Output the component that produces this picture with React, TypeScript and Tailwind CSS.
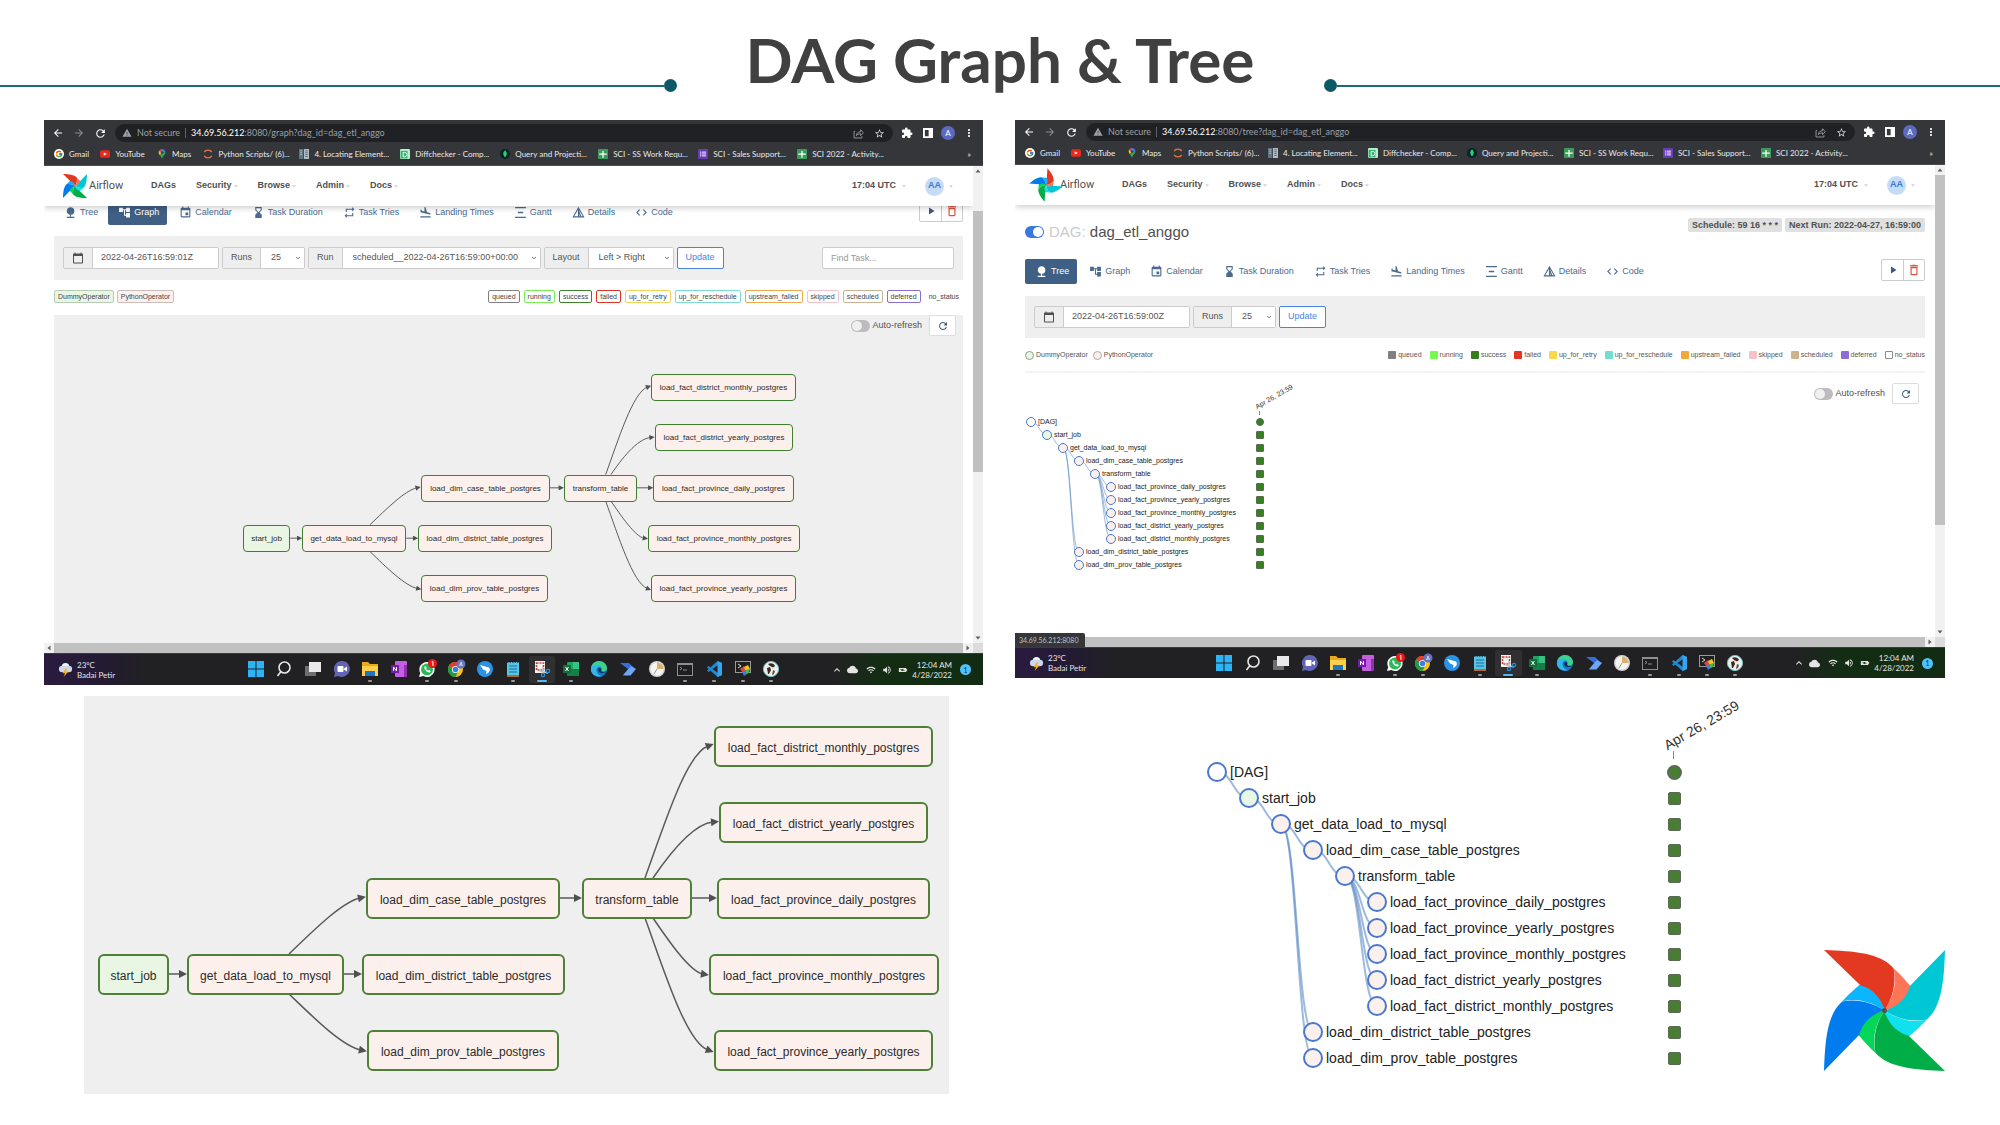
import React from "react";
import {
  MdNature,
  MdAccountTree,
  MdEvent,
  MdHourglassBottom,
  MdRepeat,
  MdFlightLand,
  MdVerticalDistribute,
  MdCode,
  MdPlayArrow,
  MdDeleteOutline,
  MdCalendarToday,
  MdRefresh,
  MdArrowBack,
  MdArrowForward,
  MdWarning,
  MdStarBorder,
  MdExtension,
  MdMoreVert,
  MdCloud,
  MdWifi,
  MdVolumeUp,
  MdBatteryChargingFull,
  MdExpandLess,
  MdExpandMore,
} from "react-icons/md";
import { FcGoogle } from "react-icons/fc";

/* ---------- Airflow pinwheel ---------- */

const BLADES = [
  { turn: 0, dark: "#e43921", light: "#ff7557" },
  { turn: 90, dark: "#00c7d4", light: "#11e1ee" },
  { turn: 180, dark: "#00ad46", light: "#04d659" },
  { turn: 270, dark: "#017cee", light: "#0cb6ff" },
];

function Pinwheel({ className }: { className: string }) {
  return (
    <svg viewBox="0 0 120 120" className={className} role="img" aria-label="Apache Airflow">
      {BLADES.map((b) => (
        <path
          key={b.light}
          transform={`rotate(${b.turn} 60 60)`}
          d="M69 18 C78 26 83 33 87 37 C84 48 74 57 60 60 C68 48 73 33 69 18 Z"
          fill={b.light}
        />
      ))}
      {BLADES.map((b) => (
        <path
          key={b.dark}
          transform={`rotate(${b.turn} 60 60)`}
          d="M0 0 C30 1 56 3 69 18 C72 33 68 48 60 60 C57 48 48 38 36 35 Z"
          fill={b.dark}
        />
      ))}
      <circle cx="60" cy="60" r="2.5" fill="#51504f" />
    </svg>
  );
}

/* ---------- DAG graph ---------- */

type GraphNode = { id: string; x: number; w: number; row: number };

const NODES: GraphNode[] = [
  { id: "start_job", x: 14, w: 71, row: 3 },
  { id: "get_data_load_to_mysql", x: 103, w: 157, row: 3 },
  { id: "load_dim_case_table_postgres", x: 282, w: 194, row: 2 },
  { id: "load_dim_district_table_postgres", x: 278, w: 203, row: 3 },
  { id: "load_dim_prov_table_postgres", x: 283, w: 192, row: 4 },
  { id: "transform_table", x: 498, w: 110, row: 2 },
  { id: "load_fact_district_monthly_postgres", x: 630, w: 219, row: 0 },
  { id: "load_fact_district_yearly_postgres", x: 635, w: 209, row: 1 },
  { id: "load_fact_province_daily_postgres", x: 633, w: 213, row: 2 },
  { id: "load_fact_province_monthly_postgres", x: 625, w: 230, row: 3 },
  { id: "load_fact_province_yearly_postgres", x: 630, w: 219, row: 4 },
];

const EDGES = [
  "M85 278 H97",
  "M260 278 H272",
  "M205 258 C230 234 258 206 276 202",
  "M205 298 C230 322 258 350 277 354",
  "M476 202 H492",
  "M608 202 H627",
  "M561 182 C580 130 602 58 624 50",
  "M569 182 C584 160 608 128 629 126",
  "M569 222 C584 244 606 276 619 278",
  "M561 222 C580 274 602 346 624 354",
];

function Graph({ large }: { large?: boolean }) {
  const k = large ? 1 : 0.6625;
  const id = large ? "tip-l" : "tip-s";
  const px = (n: number) => Math.round(n * k);
  return (
    <div className="relative" style={{ width: px(860), height: px(398) }}>
      <svg
        className="absolute inset-0"
        width={px(860)}
        height={px(398)}
        viewBox={`0 0 ${px(860)} ${px(398)}`}
        fill="none"
      >
        <defs>
          <marker id={id} viewBox="0 0 8 8" refX="2" refY="4" markerWidth="9" markerHeight="8" markerUnits="userSpaceOnUse" orient="auto">
            <path d="M0 0 L8 4 L0 8 Z" fill="#505050" />
          </marker>
        </defs>
        <g transform={`scale(${k})`}>
          {EDGES.map((d) => (
            <path key={d} d={d} stroke="#5a5a5a" strokeWidth="1.5" markerEnd={`url(#${id})`} />
          ))}
        </g>
      </svg>
      {NODES.map((n) => (
        <div
          key={n.id}
          className={`absolute flex items-center justify-center whitespace-nowrap text-[#2b2b2b] ${
            large
              ? "rounded-md border-2 border-[#4f8038] pt-0.5 text-[12px]"
              : "rounded border border-[#3f8030] text-[8px]"
          } ${n.id === "start_job" ? "bg-[#e9f6e3]" : "bg-[#fbf0ec]"}`}
          style={{ left: px(n.x), width: px(n.w), top: px(50 + n.row * 76 - 20), height: px(41) }}
        >
          {n.id}
        </div>
      ))}
    </div>
  );
}

/* ---------- DAG tree ---------- */

type TreeRow = { label: string; depth: number; parent: number; tint: string };

const PINK = "bg-[#fbf0ec]";
const ROWS: TreeRow[] = [
  { label: "[DAG]", depth: 0, parent: -1, tint: "bg-white" },
  { label: "start_job", depth: 1, parent: 0, tint: "bg-[#e8f7e4]" },
  { label: "get_data_load_to_mysql", depth: 2, parent: 1, tint: PINK },
  { label: "load_dim_case_table_postgres", depth: 3, parent: 2, tint: PINK },
  { label: "transform_table", depth: 4, parent: 3, tint: PINK },
  { label: "load_fact_province_daily_postgres", depth: 5, parent: 4, tint: PINK },
  { label: "load_fact_province_yearly_postgres", depth: 5, parent: 4, tint: PINK },
  { label: "load_fact_province_monthly_postgres", depth: 5, parent: 4, tint: PINK },
  { label: "load_fact_district_yearly_postgres", depth: 5, parent: 4, tint: PINK },
  { label: "load_fact_district_monthly_postgres", depth: 5, parent: 4, tint: PINK },
  { label: "load_dim_district_table_postgres", depth: 3, parent: 2, tint: PINK },
  { label: "load_dim_prov_table_postgres", depth: 3, parent: 2, tint: PINK },
];

function Tree({ large }: { large?: boolean }) {
  const u = large ? 2 : 1;
  const cx = (i: number) => (5 + ROWS[i].depth * 16) * u;
  const cy = (i: number) => (i * 13 + 6.5) * u;
  return (
    <div className={large ? "w-[480px] pt-[81px]" : "ml-px w-[240px] pt-[42px]"}>
      <div className="relative">
        <svg className="absolute inset-0" width={240 * u} height={156 * u} fill="none">
          {ROWS.map((r, i) => {
            if (r.parent < 0) return null;
            const mid = (cx(r.parent) + cx(i)) / 2;
            return (
              <path
                key={r.label}
                d={`M${cx(r.parent)} ${cy(r.parent)} C${mid} ${cy(r.parent)} ${mid} ${cy(i)} ${cx(i)} ${cy(i)}`}
                stroke="#5b8bc4"
                strokeOpacity="0.6"
                strokeWidth={large ? 2 : 1}
              />
            );
          })}
        </svg>
        <div
          className={`absolute left-full origin-bottom-left -rotate-30 whitespace-nowrap text-[#333] ${
            large ? "bottom-full -ml-[18px] mb-1.5 text-[14px] leading-4" : "bottom-full -ml-2 mb-1 text-[7px] leading-2"
          }`}
        >
          Apr 26, 23:59
        </div>
        <div
          className={`absolute bottom-full bg-[#888] ${large ? "right-[13px] h-2 w-px" : "right-[6px] h-1 w-px"}`}
        />
        <ul className="relative">
          {ROWS.map((r, i) => (
            <li key={r.label} className={`flex items-center justify-between ${large ? "h-[26px]" : "h-[13px]"}`}>
              <span className={`flex items-center ${large ? "gap-[3px]" : "gap-0.5"}`} style={{ marginLeft: r.depth * 16 * u }}>
                <span
                  className={`rounded-full border-[#4a78d0] ${r.tint} ${
                    large ? "size-5 border-2" : "size-2.5 border"
                  }`}
                />
                <span className={`whitespace-nowrap text-[#222] ${large ? "text-[14px] leading-5" : "text-[7px] leading-3"}`}>{r.label}</span>
              </span>
              <span
                className={`border border-[#5a6a55] ${large ? "bg-[#4a7d34]" : "bg-[#35801f]"} ${
                  i === 0 ? "rounded-full" : large ? "rounded-xs" : "rounded-[1px]"
                } ${large ? (i === 0 ? "mr-[5px] size-[15px] border-2" : "mr-1.5 size-[13px]") : "mr-0.5 size-2"}`}
              />
            </li>
          ))}
        </ul>
      </div>
    </div>
  );
}

/* ---------- Browser chrome ---------- */

function SheetIcon() {
  return (
    <svg viewBox="0 0 16 16" className="size-2.5 shrink-0">
      <rect width="16" height="16" rx="1" fill="#3c9a5a" />
      <path d="M7 3h2v4h5v2H9v5H7V9H2V7h5z" fill="#fff" />
    </svg>
  );
}

const BOOKMARKS: { label: string; icon: React.ReactNode }[] = [
  {
    label: "Gmail",
    icon: (
      <span className="flex size-2.5 shrink-0 items-center justify-center rounded-full bg-white">
        <FcGoogle className="size-2" />
      </span>
    ),
  },
  {
    label: "YouTube",
    icon: (
      <svg viewBox="0 0 16 16" className="size-2.5 shrink-0">
        <rect y="2" width="16" height="12" rx="3" fill="#e8291c" />
        <path d="M6 5.5v5l5-2.5z" fill="#fff" />
      </svg>
    ),
  },
  {
    label: "Maps",
    icon: (
      <svg viewBox="0 0 16 16" className="size-2.5 shrink-0">
        <path d="M8 0a5.5 5.5 0 0 0-5 3.2L8 8z" fill="#ea4335" />
        <path d="M3 3.2C2 6 3 8 4.500 10L8 5.500z" fill="#fbbc04" />
        <path d="M8 0a5.500 5.500 0 0 1 5.300 4L8 7z" fill="#4285f4" />
        <path d="M13.300 4c1 5-4 6-5.300 12C7.500 13 6 12 4.500 10z" fill="#34a853" />
        <circle cx="8" cy="5.500" r="2" fill="#1c3f94" />
      </svg>
    ),
  },
  {
    label: "Python Scripts/ (6)...",
    icon: (
      <svg viewBox="0 0 16 16" className="size-2.5 shrink-0" fill="none" stroke="#e8743b" strokeWidth="2">
        <path d="M2 5C4 .5 12 .5 14 5M2 11c2 4.500 10 4.500 12 0" />
      </svg>
    ),
  },
  {
    label: "4. Locating Element...",
    icon: (
      <svg viewBox="0 0 16 16" className="size-2.5 shrink-0">
        <rect width="7" height="16" fill="#5f7380" />
        <rect x="8" width="8" height="16" fill="#aebbc4" />
        <path d="M10 3h4M10 6h4M10 9h4M10 12h4" stroke="#3b4a55" />
        <path d="M2 3h3M2 6h3M2 9h3" stroke="#dde3e7" />
      </svg>
    ),
  },
  {
    label: "Diffchecker - Comp...",
    icon: (
      <svg viewBox="0 0 16 16" className="size-2.5 shrink-0">
        <rect width="16" height="16" rx="2" fill="#b9f0cf" />
        <rect x="1" y="3" width="11" height="12" fill="#2fb56b" />
        <path d="M5 5.500h2.500a3 3 0 0 1 0 7H5z" fill="none" stroke="#fff" strokeWidth="1.500" />
      </svg>
    ),
  },
  {
    label: "Query and Projecti...",
    icon: (
      <svg viewBox="0 0 16 16" className="size-2.5 shrink-0">
        <circle cx="8" cy="8" r="8" fill="#06222b" />
        <path d="M8 2c4 4 3.500 8 0 11-3.500-3-4-7 0-11z" fill="#25d366" />
      </svg>
    ),
  },
  { label: "SCI - SS Work Requ...", icon: <SheetIcon /> },
  {
    label: "SCI - Sales Support...",
    icon: (
      <svg viewBox="0 0 16 16" className="size-2.5 shrink-0">
        <rect width="16" height="16" rx="1" fill="#673ab7" />
        <path d="M3 5h2M6 5h7M3 8h2M6 8h7M3 11h2M6 11h7" stroke="#fff" strokeWidth="1.500" />
      </svg>
    ),
  },
  { label: "SCI 2022 - Activity...", icon: <SheetIcon /> },
];

function Chrome({ path, dense }: { path: string; dense?: boolean }) {
  return (
    <div className={`bg-[#35363a] font-[Lato,sans-serif] text-white ${dense ? "pt-[3px]" : "pt-1"}`}>
      <div className="flex h-[18px] items-center px-2">
        <button type="button" aria-label="Back" className="w-[21px]">
          <MdArrowBack className="size-3" />
        </button>
        <button type="button" aria-label="Forward" className="w-[21px] text-[#8a8b8e]">
          <MdArrowForward className="size-3" />
        </button>
        <button type="button" aria-label="Reload" className="w-[21px]">
          <MdRefresh className="size-[13px]" />
        </button>
        <div className="flex h-[18px] flex-1 items-center rounded-full bg-[#202124] pr-2 pl-[7px] text-[9px] text-[#9aa0a6]">
          <MdWarning className="mr-[5px] size-2.5" />
          <span>Not secure</span>
          <span className="mx-[5px] h-2.5 w-px bg-[#5f6368]" />
          <span>
            <span className="text-white">34.69.56.212</span>
            {path}
          </span>
          <svg viewBox="0 0 16 16" className="ml-auto size-[11px]" fill="none" stroke="currentColor" strokeWidth="1.300">
            <path d="M3 5H1.500v9.500H13V12M5 11c0-4 3-5.500 6-5.500V2.500L15 7l-4 4V8.500c-3 0-4.500.5-6 2.500z" />
          </svg>
          <MdStarBorder className="ml-2.5 size-[11px] text-[#cfd1d4]" />
        </div>
        <MdExtension className="ml-2 size-3" />
        <svg viewBox="0 0 16 16" className="ml-2.5 size-2.5">
          <path d="M0 0h16v16H0zM3 3v10h6V3z" fill="#fff" fillRule="evenodd" />
        </svg>
        <span className="ml-2 flex size-3.5 items-center justify-center rounded-full bg-[#5c6bc0] text-[8px]">A</span>
        <MdMoreVert className="ml-2 size-3" />
      </div>
      <div className="grid h-6 grid-cols-[46fr_56fr_46fr_95fr_100fr_99fr_97fr_99fr_98fr_184fr] items-center border-b border-[#4a4b4f] pl-2.5 text-[8px] text-[#e8eaed]">
        {BOOKMARKS.map((b, i) => (
          <div key={b.label} className="flex min-w-0 items-center gap-[5px] whitespace-nowrap">
            {b.icon}
            <a href="#" className="leading-3">
              {b.label}
            </a>
            {i === BOOKMARKS.length - 1 && <span className="mr-3 ml-auto">»</span>}
          </div>
        ))}
      </div>
    </div>
  );
}

/* ---------- Airflow page parts ---------- */

function Caret() {
  return (
    <svg viewBox="0 0 8 5" className="h-[3px] w-1">
      <path d="M0 0h8L4 5z" fill="#d9cfdb" />
    </svg>
  );
}

function Nav({ spin }: { spin?: boolean }) {
  return (
    <nav className="relative z-10 flex h-10 items-center bg-white pl-[19px] text-[9px] font-bold text-[#51504f] shadow-[0_2px_6px_rgba(0,0,0,0.2)]">
      <Pinwheel className={spin ? "size-6 rotate-50" : "size-6"} />
      <span className="ml-0.5 w-[62px] font-[Roboto,sans-serif] text-[11px] font-normal">Airflow</span>
      <div className="flex items-center gap-5">
        <a href="#">DAGs</a>
        {["Security", "Browse", "Admin", "Docs"].map((t) => (
          <button key={t} type="button" className="flex items-center gap-0.5">
            {t}
            <Caret />
          </button>
        ))}
      </div>
      <button type="button" className="ml-auto flex items-center gap-1.5">
        17:04 UTC
        <Caret />
      </button>
      <button type="button" className="mr-5 ml-[19px] flex items-center gap-[5px]">
        <span className="flex size-[19px] items-center justify-center rounded-full bg-[#c5dcf8] text-[9px] text-[#3a78d6]">AA</span>
        <Caret />
      </button>
    </nav>
  );
}

function DetailsIcon({ className }: { className?: string }) {
  return (
    <svg viewBox="0 0 24 24" className={className} fill="none" stroke="currentColor" strokeWidth="2">
      <path d="M12 3.500L21.500 20h-19zM12 4v16M12 8l4.500 12" />
      <path d="M12 6l5 14h-5z" fill="currentColor" fillOpacity=".35" stroke="none" />
    </svg>
  );
}

const TABS = [
  { label: "Tree", Icon: MdNature },
  { label: "Graph", Icon: MdAccountTree },
  { label: "Calendar", Icon: MdEvent },
  { label: "Task Duration", Icon: MdHourglassBottom },
  { label: "Task Tries", Icon: MdRepeat },
  { label: "Landing Times", Icon: MdFlightLand },
  { label: "Gantt", Icon: MdVerticalDistribute },
  { label: "Details", Icon: DetailsIcon },
  { label: "Code", Icon: MdCode },
];

function Tabs({ active }: { active: string }) {
  return (
    <div className="flex items-start justify-between">
      <div className="flex gap-0.5 text-[9px]">
        {TABS.map(({ label, Icon }) => (
          <a
            key={label}
            href="#"
            className={`flex h-[25px] items-center gap-[3px] rounded-xs pr-2 pl-2.5 whitespace-nowrap ${
              label === active ? "bg-[#405f84] text-white" : "text-[#4a6a8f]"
            }`}
          >
            <Icon className="size-[13px]" />
            {label}
          </a>
        ))}
      </div>
      <div className="flex h-[22px] rounded-xs border border-[#ccc]">
        <button type="button" aria-label="Trigger DAG" className="flex w-[21px] items-center justify-center text-[#3d5a80]">
          <MdPlayArrow className="size-3" />
        </button>
        <button type="button" aria-label="Delete DAG" className="flex w-[21px] items-center justify-center border-l border-[#ccc] text-[#d9533b]">
          <MdDeleteOutline className="size-3.5" />
        </button>
      </div>
    </div>
  );
}

function DateField({ id, value }: { id: string; value: string }) {
  return (
    <div className="flex h-[22px] rounded-xs border border-[#ccc]">
      <label htmlFor={id} aria-label="Base date" className="flex w-[29px] items-center justify-center border-r border-[#ccc] bg-[#eee] text-[#51504f]">
        <MdCalendarToday className="size-3" />
      </label>
      <input id={id} defaultValue={value} className="w-[125px] bg-white px-2 text-[9px] text-[#555] outline-none" />
    </div>
  );
}

function Picker({ id, label, value, width }: { id: string; label: string; value: string; width: string }) {
  return (
    <div className="flex h-[22px] rounded-xs border border-[#ccc] text-[9px] text-[#555]">
      <label htmlFor={id} className="flex items-center border-r border-[#ccc] bg-[#eee] px-2">
        {label}
      </label>
      <div className={`relative ${width}`}>
        <select id={id} className="h-full w-full appearance-none bg-white pl-2.5 outline-none">
          <option>{value}</option>
        </select>
        <MdExpandMore className="pointer-events-none absolute top-1.5 right-0.5 size-2" />
      </div>
    </div>
  );
}

function UpdateButton() {
  return (
    <button type="button" className="h-[22px] rounded-xs border border-[#4a84e0] bg-white px-2 text-[9px] text-[#4a84e0]">
      Update
    </button>
  );
}

function AutoRefresh() {
  return (
    <div className="flex items-center text-[9px] text-[#51504f]">
      <label className="flex items-center gap-0.5">
        <input type="checkbox" className="peer sr-only" />
        <span className="flex h-3 w-[19px] items-center rounded-full bg-[#bdbbbb] px-px">
          <span className="size-2.5 rounded-full bg-[#f0f0f0]" />
        </span>
        Auto-refresh
      </label>
      <button
        type="button"
        aria-label="Refresh"
        className="ml-[7px] flex h-[21px] w-[27px] items-center justify-center rounded-xs border border-[#ddd] bg-white text-[#3d5a80]"
      >
        <MdRefresh className="size-3" />
      </button>
    </div>
  );
}

const STATES = [
  { label: "queued", box: "border-[#808080]", fill: "bg-[#808080]" },
  { label: "running", box: "border-[#77ee55]", fill: "bg-[#74f94c]" },
  { label: "success", box: "border-[#3f8030]", fill: "bg-[#367c21]" },
  { label: "failed", box: "border-[#dd3322]", fill: "bg-[#e73323]" },
  { label: "up_for_retry", box: "border-[#f3d35a]", fill: "bg-[#f9d849]" },
  { label: "up_for_reschedule", box: "border-[#7cdcd0]", fill: "bg-[#75ddd0]" },
  { label: "upstream_failed", box: "border-[#eaa94a]", fill: "bg-[#f1a83b]" },
  { label: "skipped", box: "border-[#f3c3cb]", fill: "bg-[#f5c1cb]" },
  { label: "scheduled", box: "border-[#ccb294]", fill: "bg-[#cdb390]" },
  { label: "deferred", box: "border-[#8a70d6]", fill: "bg-[#8c6fd6]" },
  { label: "no_status", box: "border-transparent", fill: "border border-[#888] bg-white" },
];

/* ---------- Windows taskbar ---------- */

const TASK_ICONS: { name: string; open?: boolean; art: React.ReactNode }[] = [
  { name: "Start", art: <path d="M0 0h7.500v7.500H0zM8.500 0H16v7.500H8.500zM0 8.500h7.500V16H0zM8.500 8.500H16V16H8.500z" fill="#2db4f5" /> },
  {
    name: "Search",
    art: (
      <g fill="none" stroke="#e6e6e6" strokeWidth="1.600">
        <circle cx="8.500" cy="6.500" r="5.500" />
        <path d="M4.800 10.800L1.500 15" />
      </g>
    ),
  },
  {
    name: "Task view",
    art: (
      <>
        <rect y="5" width="11" height="10" fill="#6f6f6f" />
        <rect x="4" y="1" width="12" height="10" fill="#e8e8e8" />
      </>
    ),
  },
  {
    name: "Chat",
    art: (
      <>
        <path d="M8 0a8 8 0 1 1-4 15L0 16l1-4A8 8 0 0 1 8 0z" fill="#6264b8" />
        <rect x="3.500" y="5" width="6" height="6" rx="1" fill="#fff" />
        <path d="M10 7.500l3-2v5l-3-2z" fill="#fff" />
      </>
    ),
  },
  {
    name: "File Explorer",
    open: true,
    art: (
      <>
        <path d="M0 1h6l2 2h8v12H0z" fill="#e8a91c" />
        <path d="M0 5h16v10H0z" fill="#fccf4d" />
        <path d="M3 10h10v5H3z" fill="#1b76c8" />
      </>
    ),
  },
  {
    name: "OneNote",
    art: (
      <>
        <rect x="4" width="12" height="16" rx="1" fill="#c35fe0" />
        <rect x="13" y="4" width="3" height="12" fill="#8f30b0" />
        <rect y="4" width="8" height="8" fill="#7719aa" />
        <path d="M2.500 10V6l3 4V6" stroke="#fff" fill="none" />
      </>
    ),
  },
  {
    name: "WhatsApp",
    open: true,
    art: (
      <>
        <path d="M8 1a7.500 7.500 0 1 1-3.600 14L0 16l1.200-4A7.500 7.500 0 0 1 8 1z" fill="#fff" />
        <circle cx="8" cy="8.500" r="6" fill="#2fb85a" />
        <path d="M5.500 5.500c-1 2 2.500 6.500 5.500 6l.8-1.500-2-1-.8.8L7 8l.7-.8-.8-1.800z" fill="#fff" />
        <circle cx="13.500" cy="2.500" r="4.500" fill="#f01313" />
        <path d="M12.700 1l1.200-.8V5" stroke="#fff" fill="none" />
      </>
    ),
  },
  {
    name: "Chrome",
    open: true,
    art: (
      <>
        <circle cx="7.500" cy="8.500" r="7.500" fill="#fbc116" />
        <path d="M7.500 8.500L1 4.700A7.500 7.500 0 0 1 14 4.700z" fill="#e33b2e" />
        <path d="M7.500 8.500L1 4.700A7.500 7.500 0 0 0 7.500 16l3-6z" fill="#229a4a" />
        <circle cx="7.500" cy="8.500" r="3.600" fill="#fff" />
        <circle cx="7.500" cy="8.500" r="2.800" fill="#3b7de8" />
        <circle cx="13" cy="3" r="4.500" fill="#6674c4" />
        <path d="M11.500 5L13 1l1.500 4M12 4h2" stroke="#e6e8f5" strokeWidth=".8" fill="none" />
      </>
    ),
  },
  {
    name: "Bird",
    art: (
      <>
        <circle cx="8" cy="8" r="8" fill="#2b93e4" />
        <path d="M3 4l9 2.500c1.500 2 1 4-1 5.500L9 13l.5-3L6 8.500z" fill="#fff" />
      </>
    ),
  },
  {
    name: "Notepad",
    open: true,
    art: (
      <>
        <rect x="2" y="1" width="12" height="14" fill="#58c5e8" />
        <path d="M2 14h12v2H2z" fill="#b56a2c" />
        <path d="M4 5h8M4 8h8M4 11h8" stroke="#1a6f93" />
        <path d="M2 1.500h12" stroke="#2b5b70" strokeDasharray="1.500 1" />
      </>
    ),
  },
  {
    name: "Snipping Tool",
    open: true,
    art: (
      <>
        <path d="M1 0h10v12H1z" fill="#f3f3f3" />
        <path d="M2.500 2h7v7h-7z" fill="none" stroke="#c8412f" strokeDasharray="2 1" strokeWidth="1.500" />
        <path d="M9 6v6M6 10l8 2" stroke="#b9c6cf" strokeWidth="1.500" />
        <circle cx="14" cy="10" r="1.700" fill="none" stroke="#2d8fd5" strokeWidth="1.200" />
        <circle cx="9" cy="14" r="1.700" fill="none" stroke="#2d8fd5" strokeWidth="1.200" />
      </>
    ),
  },
  {
    name: "Excel",
    open: true,
    art: (
      <>
        <rect x="4" y="1" width="12" height="14" rx="1" fill="#21a366" />
        <path d="M10 1h6v7h-6z" fill="#33c481" />
        <path d="M4 8h12v7H4z" fill="#138048" />
        <rect y="4" width="8" height="8" fill="#0f703b" />
        <path d="M2.500 6l3 4M5.500 6l-3 4" stroke="#fff" />
      </>
    ),
  },
  {
    name: "Edge",
    art: (
      <>
        <circle cx="8" cy="8" r="8" fill="#1479c9" />
        <path d="M0 7C1 1 7-1 11 .6c4 1.700 6 6 4.500 8.400-1 1.500-4 2-5.500 1C12 7 9 4 6 4.500 3 5 1 6 0 7z" fill="#3fd08c" />
        <path d="M0 7C2 3 8 3 10 6c-3-1-5 1-4.500 4 .4 3 3 4.600 5.500 4.900C5 17-1 13 0 7z" fill="#33b6ea" />
        <path d="M8 7c-2 2 0 5 3 5 2 0 3-.5 4-1.200-1 .5-4 .5-5-.8C11 8.500 10 7 8 7z" fill="#0c2f50" />
      </>
    ),
  },
  {
    name: "Power Automate",
    art: (
      <>
        <path d="M0 2h9l6 6-6 6H3l5-6z" fill="#2f6fe0" />
        <path d="M16 8l-5.500 6.500H3L11 5z" fill="#6fa6f5" />
      </>
    ),
  },
  {
    name: "Clock",
    art: (
      <>
        <circle cx="8" cy="8" r="8" fill="#d5d5d5" />
        <circle cx="8" cy="8" r="6.500" fill="#f4f4f0" />
        <path d="M8 8V1.500A6.500 6.500 0 0 1 14.500 8z" fill="#ddb06c" />
        <path d="M8 8L5 13" stroke="#999" />
      </>
    ),
  },
  {
    name: "Terminal",
    open: true,
    art: (
      <>
        <rect y="2" width="16" height="13" fill="#8f8f8f" />
        <rect x="1" y="4" width="14" height="10" fill="#1f1f1f" />
        <path d="M3 6l2 1.500L3 9M6 9h4" stroke="#aaa" fill="none" strokeWidth=".8" />
      </>
    ),
  },
  {
    name: "VS Code",
    open: true,
    art: (
      <>
        <path d="M11.500 0L16 2v12l-4.500 2L1 6.500 2.500 5 12 12V4L2.500 11 1 9.500z" fill="#1f8ad2" />
        <path d="M11.500 0L16 2v12l-4.500 2z" fill="#35a5f0" />
      </>
    ),
  },
  {
    name: "Database client",
    open: true,
    art: (
      <>
        <rect y="0" width="16" height="12" fill="#9a9a9a" />
        <rect x="1" y="1" width="14" height="10" fill="#202020" />
        <path d="M3 3l3 2-3 2" stroke="#ddd" fill="none" />
        <path d="M5 8l4-3 2 4-3 3z" fill="#e6453b" />
        <path d="M9 6l4-2 2 4-4 3z" fill="#f3c420" />
        <path d="M7 11l4-2 2 3-4 3z" fill="#3f7be8" />
        <path d="M11 9l4-1-1 4-3 1z" fill="#4ab84a" />
      </>
    ),
  },
  {
    name: "DBeaver",
    open: true,
    art: (
      <>
        <circle cx="8" cy="8" r="7.600" fill="#f1eeea" stroke="#6cc6c9" />
        <path d="M5 3c3-1.500 6-.5 7 2l-2 1.500L7 5z" fill="#3b2a22" />
        <path d="M4 7l3-1 1 3-2 4H5z" fill="#3b2a22" />
        <path d="M10 9l2 1-1 3-2 1z" fill="#6a4a3a" />
      </>
    ),
  },
];

function Taskbar({ dense }: { dense?: boolean }) {
  return (
    <div
      className={`grid grid-cols-[21fr_58fr_21fr] items-center border-t border-[#3a3a3c] bg-[linear-gradient(90deg,#2a1b3f_0%,#231a33_6%,#212123_11%,#212123_84%,#132d13_89%,#112c12_100%)] font-[Lato,sans-serif] text-[8px] text-[#e4e4e4] ${
        dense ? "h-[31px]" : "h-8"
      }`}
    >
      <div className="flex items-center gap-1 pl-3.5 leading-[10px]">
        <svg viewBox="0 0 16 16" className="size-[15px]">
          <circle cx="8" cy="5" r="4" fill="#f0f4fb" />
          <rect x="1" y="4" width="14" height="7" rx="3.500" fill="#cdd7ea" />
          <path d="M8 7L5 12h2.500L6 16l5-6H8.500L10 7z" fill="#f6b21b" />
        </svg>
        <div>
          <div>23°C</div>
          <div>Badai Petir</div>
        </div>
      </div>
      <div className="grid h-full grid-cols-19">
        {TASK_ICONS.map((t) => (
          <button
            key={t.name}
            type="button"
            aria-label={t.name}
            className={`mx-px my-0.5 flex flex-col items-center rounded-xs pt-[5px] ${t.name === "Snipping Tool" ? "bg-[#303033]" : ""}`}
          >
            <svg viewBox="0 0 16 16" className="size-4 overflow-visible">
              {t.art}
            </svg>
            {t.open && (
              <span
                className={`mt-[3px] h-0.5 rounded-full ${t.name === "Snipping Tool" ? "w-2.5 bg-[#5bb8ea]" : "w-1 bg-[#9a9a9a]"}`}
              />
            )}
          </button>
        ))}
      </div>
      <div className="flex items-center justify-end pr-3 leading-[10px]">
        <MdExpandLess className="mr-1 size-3" />
        <MdCloud className="mr-2 size-[11px]" />
        <MdWifi className="mr-1.5 size-2.5" />
        <MdVolumeUp className="mr-1.5 size-2.5" />
        <MdBatteryChargingFull className="mr-1 size-2.5 rotate-90" />
        <div className="text-right whitespace-nowrap">
          <div>12:04 AM</div>
          <div>4/28/2022</div>
        </div>
        <span className="ml-2 flex size-[11px] items-center justify-center rounded-full bg-[#4cc2ff] text-[7px] text-[#10303f]">1</span>
      </div>
    </div>
  );
}

/* ---------- Scroll bars ---------- */

function Arrow({ turn }: { turn: string }) {
  return (
    <svg viewBox="0 0 10 10" className={`size-2.5 shrink-0 ${turn}`}>
      <path d="M5 3.500L7.500 6.500h-5z" fill="#606060" />
    </svg>
  );
}

function VScroll({ thumb }: { thumb: string }) {
  return (
    <div className="flex w-2.5 shrink-0 flex-col bg-[#f1f1f1]">
      <Arrow turn="" />
      <div className="flex-1">
        <div className={`bg-[#c1c1c1] ${thumb}`} />
      </div>
      <Arrow turn="rotate-180" />
    </div>
  );
}

function HScroll() {
  return (
    <div className="flex h-2.5 bg-[#f1f1f1]">
      <Arrow turn="-rotate-90" />
      <div className="flex-1 bg-[#c1c1c1]" />
      <Arrow turn="rotate-90" />
      <div className="w-2.5 bg-[#dcdcdc]" />
    </div>
  );
}

/* ---------- The two browser windows ---------- */

function GraphWindow() {
  return (
    <section aria-label="Graph view">
      <Chrome path=":8080/graph?dag_id=dag_etl_anggo" />
      <div className="flex">
        <div className="min-w-0 flex-1 overflow-hidden">
          <Nav />
          <div className="-mt-1.5 px-2.5">
            <Tabs active="Graph" />
            <div className="mt-[11px] flex items-center gap-[3px] bg-[#efefef] px-[9px] py-[11px]">
              <DateField id="graph-date" value="2022-04-26T16:59:01Z" />
              <Picker id="graph-runs" label="Runs" value="25" width="w-[43px]" />
              <Picker id="graph-run" label="Run" value="scheduled__2022-04-26T16:59:00+00:00" width="w-[197px]" />
              <Picker id="graph-layout" label="Layout" value="Left > Right" width="w-[84px]" />
              <UpdateButton />
              <input
                aria-label="Find Task"
                placeholder="Find Task..."
                className="ml-auto h-[22px] w-[132px] rounded-xs border border-[#ccc] bg-white px-2 text-[9px] outline-none placeholder:text-[#999]"
              />
            </div>
            <div className="mt-2.5 flex items-center justify-between text-[7px] leading-[9px] text-[#444]">
              <div className="flex gap-[3px]">
                <span className="rounded-xs border border-[#b9ccb4] bg-[#e8f7e4] px-[3px] py-px">DummyOperator</span>
                <span className="rounded-xs border border-[#ccbdba] bg-[#fbf0ec] px-[3px] py-px">PythonOperator</span>
              </div>
              <div className="flex gap-1">
                {STATES.map((s) => (
                  <span key={s.label} className={`rounded-xs border px-[3px] py-px ${s.box}`}>
                    {s.label}
                  </span>
                ))}
              </div>
            </div>
            <div className="relative mt-3 h-[328px] bg-[#efefef]">
              <div className="flex justify-end pr-[7px]">
                <AutoRefresh />
              </div>
              <div className="absolute top-[39px] left-[180px]">
                <Graph />
              </div>
            </div>
          </div>
        </div>
        <VScroll thumb="mt-[35px] h-[261px]" />
      </div>
      <HScroll />
      <Taskbar />
    </section>
  );
}

function TreeWindow() {
  return (
    <section aria-label="Tree view">
      <Chrome dense path=":8080/tree?dag_id=dag_etl_anggo" />
      <div className="flex">
        <div className="min-w-0 flex-1 overflow-hidden">
          <Nav spin />
          <div className="px-2.5">
            <div className="flex h-[54px] items-start justify-between pt-[13px]">
              <h2 className="flex items-center gap-[5px] pt-1 text-[15px] leading-5 text-[#51504f]">
                <label className="flex">
                  <input type="checkbox" defaultChecked aria-label="Pause or unpause the DAG" className="sr-only" />
                  <span className="flex h-3 w-[19px] items-center justify-end rounded-full bg-[#3a78e0] px-px">
                    <span className="size-2.5 rounded-full bg-white" />
                  </span>
                </label>
                <span>
                  <span className="text-[#cbcbcb]">DAG:</span> dag_etl_anggo
                </span>
              </h2>
              <div className="flex gap-[3px] text-[9px] leading-[14px] font-bold text-[#51504f]">
                <span className="rounded-xs bg-[#e0e0e0] px-1">Schedule: 59 16 * * *</span>
                <span className="rounded-xs bg-[#e0e0e0] px-1">Next Run: 2022-04-27, 16:59:00</span>
              </div>
            </div>
            <Tabs active="Tree" />
            <div className="mt-3 flex items-center gap-[3px] bg-[#efefef] px-[9px] py-2.5">
              <DateField id="tree-date" value="2022-04-26T16:59:00Z" />
              <Picker id="tree-runs" label="Runs" value="25" width="w-[43px]" />
              <UpdateButton />
            </div>
            <div className="mt-[11px] flex items-center justify-between text-[7px] leading-3 text-[#555]">
              <div className="flex gap-[5px]">
                <span className="flex items-center gap-0.5">
                  <span className="size-[9px] rounded-full border border-[#8f9c8c] bg-[#e8f7e4]" />
                  DummyOperator
                </span>
                <span className="flex items-center gap-0.5">
                  <span className="size-[9px] rounded-full border border-[#b3a5a2] bg-[#fbf0ec]" />
                  PythonOperator
                </span>
              </div>
              <div className="flex gap-2">
                {STATES.map((s) => (
                  <span key={s.label} className="flex items-center gap-0.5">
                    <span className={`size-2 rounded-[1px] ${s.fill}`} />
                    {s.label}
                  </span>
                ))}
              </div>
            </div>
            <div className="mt-2.5 flex h-[266px] items-start justify-between border-t-2 border-[#f3f3f3] pr-1.5">
              <Tree />
              <div className="pt-2.5">
                <AutoRefresh />
              </div>
            </div>
          </div>
        </div>
        <VScroll thumb="h-[350px]" />
      </div>
      <div className="relative">
        <HScroll />
        <div className="absolute bottom-0 left-0 h-[14px] w-[70px] rounded-tr-xs bg-[#35363a] pl-1 font-[Lato,sans-serif] text-[7px] leading-[14px] text-[#bdc1c6]">
          34.69.56.212:8080
        </div>
      </div>
      <Taskbar dense />
    </section>
  );
}

/* ---------- Slide ---------- */

export default function App() {
  return (
    <main className="min-h-screen bg-white font-['Liberation_Sans',Arial,sans-serif]">
      <header className="flex h-[120px] items-start">
        <div className="mt-[79px] flex flex-1 items-center">
          <div className="h-0.5 flex-1 bg-[#1c6b72]" />
          <div className="size-[13px] rounded-full bg-[#0c5a66]" />
        </div>
        <h1 className="mt-[23px] w-[647px] text-center font-[Lato,sans-serif] text-[62px] leading-[72px] font-bold whitespace-nowrap text-[#404040]">
          DAG Graph &amp; Tree
        </h1>
        <div className="mt-[79px] flex flex-1 items-center">
          <div className="size-[13px] rounded-full bg-[#0c5a66]" />
          <div className="h-0.5 flex-1 bg-[#1c6b72]" />
        </div>
      </header>
      <div className="grid grid-cols-[939fr_930fr] gap-8 pr-[55px] pl-11">
        <div className="min-w-0">
          <GraphWindow />
          <div className="mt-[11px] mr-[34px] ml-10 overflow-hidden bg-[#efefef]">
            <Graph large />
          </div>
        </div>
        <div className="min-w-0">
          <TreeWindow />
          <div className="flex items-end justify-between pl-48">
            <Tree large />
            <Pinwheel className="size-[121px]" />
          </div>
        </div>
      </div>
    </main>
  );
}
